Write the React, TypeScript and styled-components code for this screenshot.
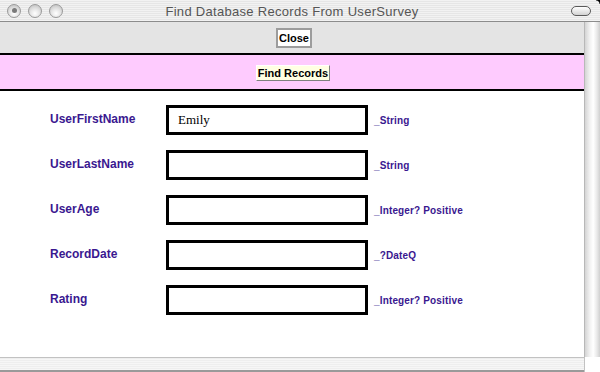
import React from 'react';
import styled, { createGlobalStyle } from 'styled-components';

const GlobalStyle = createGlobalStyle`
  html, body {
    margin: 0;
    padding: 0;
    background: #ffffff;
  }
`;

const Window = styled.div`
  width: 600px;
  height: 372px;
  display: flex;
  flex-direction: column;
  overflow: hidden;
  position: relative;
  font-family: "Liberation Sans", Arial, sans-serif;
  background: #ffffff;
`;

const TitleBar = styled.div`
  height: 21px;
  flex: 0 0 21px;
  display: flex;
  align-items: center;
  padding: 0 7px;
  border-bottom: 1px solid #8c8c8c;
  background: repeating-linear-gradient(
    to bottom,
    #f2f2f2 0px,
    #f2f2f2 1px,
    #e6e6e6 1px,
    #e6e6e6 2px
  );
  position: relative;
`;

const Lights = styled.div`
  display: flex;
  gap: 7px;
`;

const Light = styled.div<{ dot?: boolean }>`
  width: 14px;
  height: 14px;
  border-radius: 50%;
  box-sizing: border-box;
  border: 1px solid #9a9a9a;
  background: radial-gradient(circle at 50% 70%, #ffffff 0%, #e4e4e4 45%, #b9b9b9 100%);
  display: flex;
  align-items: center;
  justify-content: center;
  &::after {
    content: '';
    display: ${(p) => (p.dot ? 'block' : 'none')};
    width: 5px;
    height: 5px;
    border-radius: 50%;
    background: #7a7a7a;
  }
`;

const Title = styled.div`
  flex: 1;
  text-align: center;
  font-size: 13px;
  letter-spacing: 0.3px;
  color: #555555;
  margin-right: 56px;
  margin-left: 6px;
  padding-top: 1px;
`;

const ZoomPill = styled.div`
  width: 20px;
  height: 10px;
  box-sizing: border-box;
  border: 1px solid #5a5a5a;
  border-radius: 5px;
  background: linear-gradient(to bottom, #ffffff, #d2d2d2);
  margin-right: 2px;
`;

const Corner = styled.div`
  position: absolute;
  top: 0;
  right: 0;
  width: 4px;
  height: 4px;
  background: radial-gradient(circle at 0 100%, transparent 3px, #000 4px);
`;

const Main = styled.div`
  flex: 1;
  display: flex;
  min-height: 0;
`;

const Content = styled.div`
  flex: 1;
  display: flex;
  flex-direction: column;
`;

const Toolbar = styled.div`
  height: 31px;
  background: #e4e4e4;
  display: flex;
  align-items: center;
  justify-content: center;
  border-bottom: 2px solid #000000;
`;

const PinkBar = styled.div`
  height: 34px;
  background: #fecbfe;
  display: flex;
  align-items: center;
  justify-content: center;
  border-bottom: 2px solid #000000;
`;

const Button = styled.button<{ tone?: 'plain' | 'note' }>`
  font-family: "Liberation Sans", Arial, sans-serif;
  font-weight: bold;
  font-size: 11px;
  color: #000000;
  padding: 0;
  margin: 0;
  cursor: pointer;
  box-sizing: border-box;
  ${(p) =>
    p.tone === 'note'
      ? `
    width: 74px;
    height: 16px;
    background: #ffffe2;
    border: 1px solid;
    border-color: #ffffff #808080 #808080 #ffffff;
    margin-left: 2px;
    margin-top: 1px;
  `
      : `
    width: 36px;
    height: 20px;
    background: #ffffff;
    border: 2px solid #9c9c9c;
    margin-left: 4px;
  `}
`;

const Form = styled.div`
  flex: 1;
  display: flex;
  flex-direction: column;
  gap: 15px;
  padding: 14px 0 0 50px;
`;

const Row = styled.div`
  display: flex;
  align-items: center;
  height: 30px;
`;

const Label = styled.div`
  width: 116px;
  font-size: 12px;
  font-weight: bold;
  color: #3a1890;
  margin-top: -2px;
`;

const Field = styled.div`
  width: 202px;
  height: 30px;
  box-sizing: border-box;
  border: 3px solid #000000;
  background: #ffffff;
  display: flex;
  align-items: center;
  padding-left: 9px;
  font-family: "Liberation Serif", "Times New Roman", serif;
  font-size: 13px;
  color: #000000;
`;

const TypeHint = styled.div`
  margin-left: 6px;
  font-size: 10px;
  font-weight: bold;
  letter-spacing: 0.15px;
  color: #3a1890;
  margin-top: 1px;
`;

const VScroll = styled.div`
  width: 16px;
  flex: 0 0 16px;
  box-sizing: border-box;
  border-left: 1px solid #b8b8b8;
  background: linear-gradient(
    to right,
    #d4d4d4 0%,
    #f0f0f0 30%,
    #ffffff 55%,
    #e8e8e8 80%,
    #cfcfcf 100%
  );
`;

const BottomBar = styled.div`
  height: 15px;
  flex: 0 0 15px;
  display: flex;
`;

const HScroll = styled.div`
  flex: 1;
  box-sizing: border-box;
  border-top: 1px solid #c2c2c2;
  border-bottom: 2px solid #9a9a9a;
  background: repeating-linear-gradient(
    to bottom,
    #eeeeee 0px,
    #eeeeee 1px,
    #f6f6f6 1px,
    #f6f6f6 2px
  );
`;

const ScrollCorner = styled.div`
  width: 16px;
  box-sizing: border-box;
  border-left: 1px solid #c2c2c2;
  background: #ffffff;
`;

const fields = [
  { label: 'UserFirstName', value: 'Emily', hint: '_String' },
  { label: 'UserLastName', value: '', hint: '_String' },
  { label: 'UserAge', value: '', hint: '_Integer? Positive' },
  { label: 'RecordDate', value: '', hint: '_?DateQ' },
  { label: 'Rating', value: '', hint: '_Integer? Positive' },
];

const App = () => {
  return (
    <>
      <GlobalStyle />
      <Window>
        <TitleBar>
          <Lights>
            <Light dot />
            <Light />
            <Light />
          </Lights>
          <Title>Find Database Records From UserSurvey</Title>
          <ZoomPill />
          <Corner />
        </TitleBar>
        <Main>
          <Content>
            <Toolbar>
              <Button>Close</Button>
            </Toolbar>
            <PinkBar>
              <Button tone="note">Find Records</Button>
            </PinkBar>
            <Form>
              {fields.map((f) => (
                <Row key={f.label}>
                  <Label>{f.label}</Label>
                  <Field>{f.value}</Field>
                  <TypeHint>{f.hint}</TypeHint>
                </Row>
              ))}
            </Form>
          </Content>
          <VScroll />
        </Main>
        <BottomBar>
          <HScroll />
          <ScrollCorner />
        </BottomBar>
      </Window>
    </>
  );
};

export default App;
